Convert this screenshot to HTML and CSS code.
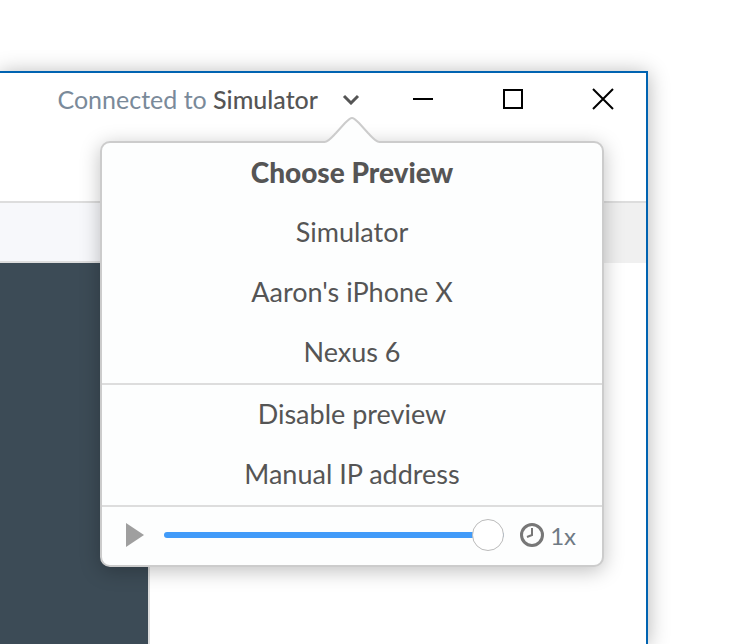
FILE: index.html
```
<!DOCTYPE html>
<html lang="en">
<head>
    <meta charset="UTF-8">
    <meta name="viewport" content="width=device-width, initial-scale=1.0">
    <title>Choose Preview</title>
    <link rel="stylesheet" href="styles.css">
</head>
<body>
    <div class="window">
        <header class="titlebar">
            <button class="connection" type="button" aria-haspopup="true" aria-expanded="true">
                <span>Connected to <span class="device">Simulator</span></span>
                <svg class="chevron" width="18" height="12" viewBox="0 0 18 12">
                    <path d="M2 3l7 7 7-7" fill="none" stroke="#555" stroke-width="3"/>
                </svg>
            </button>
            <div class="window-buttons">
                <button type="button" aria-label="Minimize">
                    <svg width="22" height="22" viewBox="0 0 22 22"><path d="M1 11h20" stroke="#000" stroke-width="2"/></svg>
                </button>
                <button type="button" aria-label="Maximize">
                    <svg width="22" height="22" viewBox="0 0 22 22"><path d="M2 2h18v18H2z" fill="none" stroke="#000" stroke-width="2"/></svg>
                </button>
                <button type="button" aria-label="Close">
                    <svg width="22" height="22" viewBox="0 0 22 22"><path d="M1 1l20 20M21 1L1 21" stroke="#000" stroke-width="2"/></svg>
                </button>
            </div>
        </header>
        <div class="toolbar">
            <div class="toolbar-left"></div>
            <div class="toolbar-right"></div>
        </div>
        <main class="content">
            <div class="sidebar"></div>
        </main>

        <div class="popover">
            <svg class="arrow" width="54" height="26" viewBox="0 0 54 26">
                <path d="M0 26V25C4 24 7 20 11 16L20 6C23 3 25 1 27 1S31 3 34 6L43 16C47 20 50 24 54 25V26z" fill="#fdfefe"/>
                <path d="M0 25C4 24 7 20 11 16L20 6C23 3 25 1 27 1S31 3 34 6L43 16C47 20 50 24 54 25" fill="none" stroke="#ccc" stroke-width="2"/>
            </svg>
            <section class="group">
                <h1 class="item title">Choose Preview</h1>
                <button class="item" type="button">Simulator</button>
                <button class="item" type="button">Aaron's iPhone X</button>
                <button class="item" type="button">Nexus 6</button>
            </section>
            <section class="group">
                <button class="item" type="button">Disable preview</button>
                <button class="item" type="button">Manual IP address</button>
            </section>
            <div class="playback">
                <button class="play" type="button" aria-label="Play">
                    <svg width="18" height="24" viewBox="0 0 18 24"><path d="M0 0l18 12L0 24z" fill="#9f9f9f"/></svg>
                </button>
                <input class="speed" id="speed" type="range" min="0" max="1" step="0.1" value="1" aria-label="Playback speed">
                <label class="rate" for="speed">
                    <svg width="24" height="24" viewBox="0 0 24 24" fill="none" stroke="#777">
                        <circle cx="12" cy="12" r="10.5" stroke-width="3"/>
                        <path d="M12 5v7l-5 2" stroke-width="2"/>
                    </svg>
                    1x
                </label>
            </div>
        </div>
    </div>
</body>
</html>
```
FILE: styles.css
```
* {
    box-sizing: border-box;
}
body {
    margin: 0;
    height: 100vh;
    padding: 71px 90px 0 0;
    overflow: hidden;
    background-color: #fff;
    font-family: Lato, "Liberation Sans", sans-serif;
    font-size: 27px;
    color: #555;
}
button {
    margin: 0;
    padding: 0;
    border: none;
    background: none;
    font: inherit;
    color: inherit;
    cursor: pointer;
}
svg {
    display: block;
}
.window {
    position: relative;
    display: flex;
    flex-direction: column;
    height: 100%;
    border-top: 2px solid #0063b1;
    border-right: 2px solid #0063b1;
    background-color: #fff;
    box-shadow: 0 2px 20px rgba(0, 0, 0, 0.3);
}
.titlebar {
    display: flex;
    justify-content: flex-end;
    align-items: flex-start;
    gap: 52px;
    height: 130px;
    padding-right: 32px;
    border-bottom: 2px solid #ddd;
}
.connection {
    display: flex;
    align-items: center;
    gap: 24px;
    height: 52px;
    font-size: 25px;
    color: #7a8a9a;
}
.device {
    font-weight: 500;
    color: #555;
}
.window-buttons {
    display: flex;
    align-items: center;
    gap: 68px;
    height: 52px;
}
.toolbar {
    display: flex;
    height: 60px;
}
.toolbar-left {
    width: 150px;
    border-bottom: 2px solid #ddd;
    background-color: #f7f8fb;
}
.toolbar-right {
    flex: 1;
    background-color: #f0f0f0;
}
.content {
    display: flex;
    flex: 1;
}
.sidebar {
    width: 150px;
    border-right: 2px solid #ddd;
    background-color: #3c4b56;
}
.popover {
    position: absolute;
    top: 68px;
    right: 42px;
    width: 504px;
    border: 2px solid #ccc;
    border-radius: 10px;
    background-color: #fdfefe;
    box-shadow: 0 4px 20px rgba(0, 0, 0, 0.25);
}
.arrow {
    position: absolute;
    top: -26px;
    left: 223px;
}
.group {
    border-bottom: 2px solid #ddd;
}
.item {
    display: block;
    width: 100%;
    height: 60px;
    margin: 0;
    padding-bottom: 2px;
    line-height: 58px;
    text-align: center;
}
.title {
    font-size: 28px;
    font-weight: 900;
}
.playback {
    display: flex;
    align-items: center;
    gap: 16px;
    height: 58px;
    padding: 0 26px 2px 24px;
}
.speed {
    flex: 1;
    min-width: 0;
    height: 32px;
    margin: 0 0 0 4px;
    background: none;
    appearance: none;
}
.speed::-webkit-slider-runnable-track {
    height: 6px;
    border-radius: 3px;
    background-color: #419bf9;
}
.speed::-webkit-slider-thumb {
    width: 32px;
    height: 32px;
    margin-top: -13px;
    border: 1px solid #bbb;
    border-radius: 50%;
    background-color: #fff;
    appearance: none;
}
.rate {
    display: flex;
    align-items: center;
    gap: 6px;
    font-size: 24px;
    color: #6f7a84;
}
```
